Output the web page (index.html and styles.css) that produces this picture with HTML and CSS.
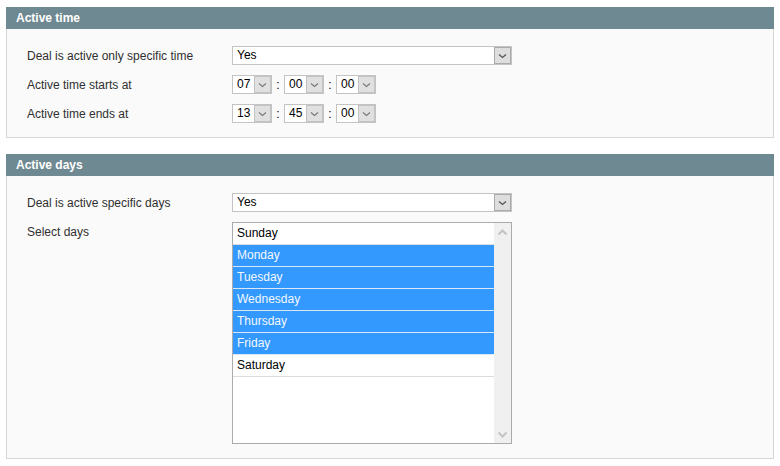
FILE: index.html
```html
<!DOCTYPE html>
<html>
<head>
<meta charset="utf-8">
<link rel="stylesheet" href="styles.css">
</head>
<body>
<div class="page">
  <section class="panel">
    <div class="panel-head">Active time</div>
    <div class="panel-body">
      <div class="row">
        <div class="label">Deal is active only specific time</div>
        <div class="select wide"><span class="val">Yes</span><span class="btn"><svg width="9" height="6" viewBox="0 0 9 6"><path d="M1 1.5 L4.5 4.5 L8 1.5" fill="none" stroke="#555" stroke-width="1.3"/></svg></span></div>
      </div>
      <div class="row">
        <div class="label">Active time starts at</div>
        <div class="time">
          <div class="select small"><span class="val">07</span><span class="btn"><svg width="9" height="6" viewBox="0 0 9 6"><path d="M1 1.5 L4.5 4.5 L8 1.5" fill="none" stroke="#777" stroke-width="1.1"/></svg></span></div>
          <span class="colon">:</span>
          <div class="select small"><span class="val">00</span><span class="btn"><svg width="9" height="6" viewBox="0 0 9 6"><path d="M1 1.5 L4.5 4.5 L8 1.5" fill="none" stroke="#777" stroke-width="1.1"/></svg></span></div>
          <span class="colon">:</span>
          <div class="select small"><span class="val">00</span><span class="btn"><svg width="9" height="6" viewBox="0 0 9 6"><path d="M1 1.5 L4.5 4.5 L8 1.5" fill="none" stroke="#777" stroke-width="1.1"/></svg></span></div>
        </div>
      </div>
      <div class="row">
        <div class="label">Active time ends at</div>
        <div class="time">
          <div class="select small"><span class="val">13</span><span class="btn"><svg width="9" height="6" viewBox="0 0 9 6"><path d="M1 1.5 L4.5 4.5 L8 1.5" fill="none" stroke="#777" stroke-width="1.1"/></svg></span></div>
          <span class="colon">:</span>
          <div class="select small"><span class="val">45</span><span class="btn"><svg width="9" height="6" viewBox="0 0 9 6"><path d="M1 1.5 L4.5 4.5 L8 1.5" fill="none" stroke="#777" stroke-width="1.1"/></svg></span></div>
          <span class="colon">:</span>
          <div class="select small"><span class="val">00</span><span class="btn"><svg width="9" height="6" viewBox="0 0 9 6"><path d="M1 1.5 L4.5 4.5 L8 1.5" fill="none" stroke="#777" stroke-width="1.1"/></svg></span></div>
        </div>
      </div>
    </div>
  </section>

  <section class="panel">
    <div class="panel-head">Active days</div>
    <div class="panel-body">
      <div class="row">
        <div class="label">Deal is active specific days</div>
        <div class="select wide"><span class="val">Yes</span><span class="btn"><svg width="9" height="6" viewBox="0 0 9 6"><path d="M1 1.5 L4.5 4.5 L8 1.5" fill="none" stroke="#555" stroke-width="1.3"/></svg></span></div>
      </div>
      <div class="row top">
        <div class="label list-label">Select days</div>
        <div class="listbox">
          <ul class="options">
            <li>Sunday</li>
            <li class="sel">Monday</li>
            <li class="sel">Tuesday</li>
            <li class="sel">Wednesday</li>
            <li class="sel">Thursday</li>
            <li class="sel">Friday</li>
            <li>Saturday</li>
          </ul>
          <div class="scroll">
            <svg width="11" height="7" viewBox="0 0 11 7"><path d="M1.5 5.5 L5.5 1.5 L9.5 5.5" fill="none" stroke="#c4c4c4" stroke-width="2"/></svg>
            <svg width="11" height="7" viewBox="0 0 11 7"><path d="M1.5 1.5 L5.5 5.5 L9.5 1.5" fill="none" stroke="#c4c4c4" stroke-width="2"/></svg>
          </div>
        </div>
      </div>
    </div>
  </section>
</div>
</body>
</html>
```

FILE: styles.css
```css
* { box-sizing: border-box; }
html, body { margin: 0; padding: 0; background: #ffffff; }
body {
  font-family: "Liberation Sans", Arial, sans-serif;
  font-size: 12px;
  color: #303030;
}
.page {
  padding: 7px 6px 0 6px;
}
.panel { margin-bottom: 16px; }
.panel-head {
  height: 22px;
  line-height: 22px;
  background: #6f8992;
  color: #ffffff;
  font-weight: bold;
  padding-left: 10px;
}
.panel-body {
  background: #fafafa;
  border: 1px solid #d6d6d6;
  border-top: none;
  padding: 17px 20px 14px 20px;
  display: flex;
  flex-direction: column;
  gap: 10px;
}
.row {
  display: flex;
  align-items: center;
}
.row.top { align-items: flex-start; }
.label {
  width: 205px;
  flex: none;
}
.list-label { padding-top: 3px; }
.select {
  height: 19px;
  background: #ffffff;
  border: 1px solid #c4c4c4;
  display: flex;
  align-items: stretch;
  color: #000;
}
.select .val {
  flex: 1;
  padding-left: 4px;
  line-height: 17px;
}
.select .btn {
  background: #dedede;
  border: 1px solid #ababab;
  display: flex;
  align-items: center;
  justify-content: center;
}
.select.wide { width: 280px; }
.select.wide .btn { width: 17px; }
.select.small { width: 40px; }
.select.small .btn { width: 17px; border-color: #c2c2c2; background: #e0e0e0; }
.time { display: flex; align-items: center; }
.colon {
  width: 12px;
  text-align: center;
  color: #000;
}
.listbox {
  width: 280px;
  height: 222px;
  border: 1px solid #ababab;
  background: #ffffff;
  display: flex;
}
.options {
  list-style: none;
  margin: 0;
  padding: 0;
  flex: 1;
}
.options li {
  height: 22px;
  line-height: 21px;
  padding-left: 4px;
  border-bottom: 1px solid #dcdcdc;
  color: #000;
}
.options li.sel {
  background: #3399ff;
  color: #f4f8ff;
  border-bottom-color: #d9e6f5;
}
.scroll {
  width: 17px;
  background: #f0f0f0;
  display: flex;
  flex-direction: column;
  justify-content: space-between;
  align-items: center;
  padding: 6px 0 5px 0;
}
```
